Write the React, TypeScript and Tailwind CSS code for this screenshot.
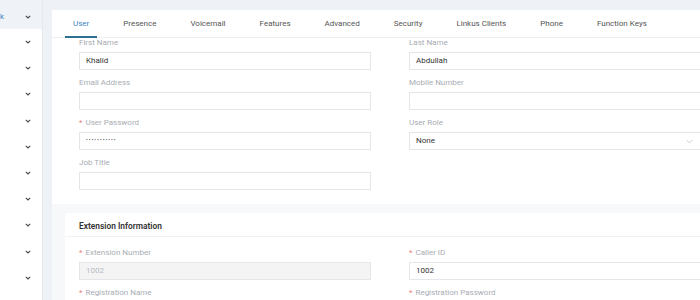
import React from "react";

const tabs = ["User", "Presence", "Voicemail", "Features", "Advanced", "Security", "Linkus Clients", "Phone", "Function Keys"];

function Chevron() {
  return (
    <svg width="6" height="4" viewBox="0 0 6 4" className="text-[#4a4a4a]">
      <path d="M0.8 0.8 L3 3 L5.2 0.8" fill="none" stroke="currentColor" strokeWidth="1.1" />
    </svg>
  );
}

function Label({ text, required }: { text: string; required?: boolean }) {
  return (
    <div className="flex h-[10px] items-center text-[8px] leading-[10px] text-[#a8acb3]">
      {required && <span className="mr-[3px] text-[#e88080]">*</span>}
      {text}
    </div>
  );
}

function Field({
  label,
  value,
  required,
  disabled,
  select,
  password,
}: {
  label: string;
  value?: string;
  required?: boolean;
  disabled?: boolean;
  select?: boolean;
  password?: boolean;
}) {
  return (
    <div className="mb-[8px]">
      <Label text={label} required={required} />
      <div
        className={
          "mt-[4px] flex h-[18px] items-center justify-between border border-[#e4e6ea] px-[6px] text-[8px] " +
          (disabled ? "bg-[#f4f4f5] text-[#b8bbc0]" : "bg-white text-[#333]")
        }
      >
        {password ? (
          <span className="text-[5px] tracking-[1.1px] text-[#444]">•••••••••••</span>
        ) : (
          <span>{value}</span>
        )}
        {select && (
          <svg width="7" height="5" viewBox="0 0 7 5" className="mr-[1px] text-[#c4c7cc]">
            <path d="M0.5 0.8 L3.5 4 L6.5 0.8" fill="none" stroke="currentColor" strokeWidth="0.8" />
          </svg>
        )}
      </div>
    </div>
  );
}

export default function App() {
  return (
    <div className="flex h-[300px] w-[700px] overflow-hidden bg-[#eef1f5] font-['Roboto','Liberation_Sans',sans-serif]">
      <aside className="flex w-[43px] shrink-0 flex-col border-r border-[#e6e9ee] bg-white">
        <div className="flex h-[29px] items-center justify-between bg-[#eff2f7] pt-[4px] pr-[11px]">
          <span className="ml-0 text-[8px] text-[#3d85c6]">k</span>
          <Chevron />
        </div>
        {Array.from({ length: 10 }).map((_, i) => (
          <div key={i} className="flex h-[26.2px] shrink-0 items-center justify-end pr-[11px]">
            <Chevron />
          </div>
        ))}
      </aside>

      <main className="flex-1 overflow-hidden pt-[10px] pl-[9px]">
        <div className="h-full bg-[#f7f8fa]">
          <div className="flex h-[28px] border-b border-[#eceef1] bg-white pl-[13px]">
            {tabs.map((t, i) => (
              <div
                key={t}
                className={
                  "mr-[18px] -mb-px flex items-center border-b-2 px-[8px] pt-[1px] text-[8px] whitespace-nowrap " +
                  (i === 0 ? "border-[#2b6f92] text-[#3d85c6]" : "border-transparent text-[#555]")
                }
              >
                {t}
              </div>
            ))}
          </div>

          <div className="grid grid-cols-[292px_292px] gap-x-[38px] bg-white pb-[6px] pl-[27px]">
            <Field label="First Name" value="Khalid" />
            <Field label="Last Name" value="Abdullah" />
            <Field label="Email Address" value="" />
            <Field label="Mobile Number" value="" />
            <Field label="User Password" required password />
            <Field label="User Role" value="None" select />
            <Field label="Job Title" value="" />
          </div>

          <div className="mt-[9px] ml-[13px] bg-white">
            <div className="flex h-[24px] items-center border-b border-[#eff1f4] pt-[4px] pl-[14px] text-[8.4px] font-semibold text-[#333]">
              Extension Information
            </div>
            <div className="grid grid-cols-[292px_292px] gap-x-[38px] pt-[11px] pl-[14px]">
              <Field label="Extension Number" value="1002" required disabled />
              <Field label="Caller ID" value="1002" required />
              <Field label="Registration Name" value="" required />
              <Field label="Registration Password" value="" required />
            </div>
          </div>
        </div>
      </main>
    </div>
  );
}
